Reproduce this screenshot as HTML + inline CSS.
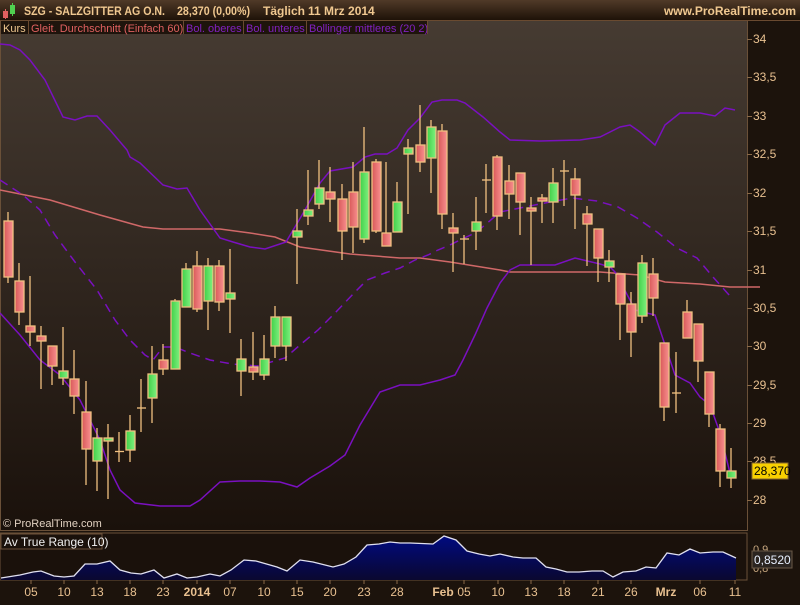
<!DOCTYPE html>
<html><head><meta charset="utf-8"><style>
html,body{margin:0;padding:0;background:#1c130c;}
body{width:800px;height:600px;overflow:hidden;font-family:"Liberation Sans",sans-serif;}
</style></head><body>
<svg width="800" height="600" xmlns="http://www.w3.org/2000/svg" font-family="Liberation Sans, sans-serif">
<defs>
<linearGradient id="tb" x1="0" y1="0" x2="0" y2="1"><stop offset="0" stop-color="#503a28"/><stop offset="1" stop-color="#1e1208"/></linearGradient>
<linearGradient id="bg" x1="0" y1="0" x2="0" y2="1"><stop offset="0" stop-color="#463b32"/><stop offset="1" stop-color="#1a110b"/></linearGradient>
<linearGradient id="rd" x1="0" y1="0" x2="1" y2="0"><stop offset="0" stop-color="#d85858"/><stop offset="1" stop-color="#f89090"/></linearGradient>
<linearGradient id="gr" x1="0" y1="0" x2="1" y2="0"><stop offset="0" stop-color="#40d048"/><stop offset="1" stop-color="#80f080"/></linearGradient>
<linearGradient id="atr" x1="0" y1="0" x2="0" y2="1"><stop offset="0" stop-color="#000a80"/><stop offset="1" stop-color="#0a0830"/></linearGradient>
</defs>
<rect width="800" height="600" fill="#1c130c"/>
<rect width="800" height="20" fill="url(#tb)"/>
<line x1="0" y1="20.5" x2="800" y2="20.5" stroke="#6a4a30"/>
<rect x="0" y="21" width="747" height="509" fill="url(#bg)"/>
<line x1="747.5" y1="21" x2="747.5" y2="530" stroke="#6a5038"/>
<line x1="0" y1="530.5" x2="748" y2="530.5" stroke="#6a5038"/>
<line x1="0.5" y1="21" x2="0.5" y2="530" stroke="#6a5038"/>
<rect x="0" y="533" width="747" height="47" fill="#1a110b" stroke="#6a5038"/>
<!-- title -->
<rect x="3" y="11" width="5" height="7" fill="#e06060"/><line x1="5.5" y1="9" x2="5.5" y2="19" stroke="#e06060"/>
<rect x="10" y="5" width="5" height="9" fill="#50d050"/><line x1="12.5" y1="3" x2="12.5" y2="16" stroke="#50d050"/>
<g font-size="12" font-weight="bold" fill="#f0c890">
<text x="24" y="15" textLength="141" lengthAdjust="spacingAndGlyphs">SZG - SALZGITTER AG O.N.</text>
<text x="177" y="15" textLength="73" lengthAdjust="spacingAndGlyphs">28,370 (0,00%)</text>
<text x="263" y="15">Täglich</text>
<text x="308" y="15">11 Mrz 2014</text>
<text x="796" y="15" text-anchor="end">www.ProRealTime.com</text>
</g>
<!-- legend -->
<rect x="1" y="21" width="426" height="13" fill="#1e140c"/>
<text x="3" y="32" font-size="11" fill="#f0c890">Kurs</text>
<line x1="28.5" y1="21" x2="28.5" y2="34" stroke="#6a4a30"/>
<text x="31" y="32" font-size="11" fill="#e06060">Gleit. Durchschnitt (Einfach 60)</text>
<line x1="183.5" y1="21" x2="183.5" y2="34" stroke="#6a4a30"/>
<text x="186" y="32" font-size="11" fill="#8020c0">Bol. oberes</text>
<line x1="243.5" y1="21" x2="243.5" y2="34" stroke="#6a4a30"/>
<text x="246" y="32" font-size="11" fill="#8020c0">Bol. unteres</text>
<line x1="306.5" y1="21" x2="306.5" y2="34" stroke="#6a4a30"/>
<text x="309" y="32" font-size="11" fill="#8020c0">Bollinger mittleres (20 2)</text>
<line x1="427.5" y1="21" x2="427.5" y2="34" stroke="#6a4a30"/>
<!-- axis -->
<g font-size="12" fill="#e8c090" stroke="none">
<text x="753" y="43">34</text><text x="753" y="81">33,5</text><text x="753" y="120">33</text><text x="753" y="158">32,5</text><text x="753" y="197">32</text><text x="753" y="235">31,5</text><text x="753" y="274">31</text><text x="753" y="312">30,5</text><text x="753" y="350">30</text><text x="753" y="389">29,5</text><text x="753" y="427">29</text><text x="753" y="465">28,5</text><text x="753" y="504">28</text>
</g>
<g stroke="#8a6a48"><line x1="747" y1="39.5" x2="752" y2="39.5"/><line x1="747" y1="77.5" x2="752" y2="77.5"/><line x1="747" y1="116.5" x2="752" y2="116.5"/><line x1="747" y1="154.5" x2="752" y2="154.5"/><line x1="747" y1="193.5" x2="752" y2="193.5"/><line x1="747" y1="231.5" x2="752" y2="231.5"/><line x1="747" y1="270.5" x2="752" y2="270.5"/><line x1="747" y1="308.5" x2="752" y2="308.5"/><line x1="747" y1="346.5" x2="752" y2="346.5"/><line x1="747" y1="385.5" x2="752" y2="385.5"/><line x1="747" y1="423.5" x2="752" y2="423.5"/><line x1="747" y1="461.5" x2="752" y2="461.5"/><line x1="747" y1="500.5" x2="752" y2="500.5"/></g>
<!-- MA60 -->
<polyline fill="none" stroke="#d06868" stroke-width="1.5" points="0,190 50,200 100,215 143,227 163,229 220,229 250,233 275,237 300,247 350,254 400,258 420,258 450,262 500,270 510,272 600,272 640,275 665,282 700,284 730,287 760,287"/>
<!-- upper band -->
<polyline fill="none" stroke="#7a10c0" stroke-width="1.5" points="0,44 10,45 20,50 30,60 45,80 63,117 75,120 87,116 97,116 110,130 127,150 130,157 140,163 163,185 177,189 187,188 200,210 220,238 233,242 250,247 265,249 286,242 305,210 320,183 330,171 353,167 365,157 375,154 387,154 397,148 408,130 420,118 432,102 442,100 457,100 465,103 483,117 500,132 510,140 540,141 580,140 600,137 620,127 630,125 640,132 655,145 665,125 680,113 700,113 715,116 725,108 735,110"/>
<!-- lower band -->
<polyline fill="none" stroke="#7a10c0" stroke-width="1.5" points="0,313 20,335 40,360 60,375 80,400 100,440 110,470 120,490 135,503 160,506 190,506 200,500 220,482 240,481 260,481 280,482 297,487 310,478 330,466 345,455 360,425 380,392 400,385 420,385 440,380 455,375 463,360 475,335 487,308 500,283 510,270 520,265 555,265 575,258 600,264 610,267 615,272 630,300 635,310 655,315 665,345 675,375 690,383 700,397 710,405 720,433 731,477"/>
<!-- middle dashed -->
<polyline fill="none" stroke="#7a10c0" stroke-width="1.5" stroke-dasharray="9,6" points="0,180 23,195 40,210 55,235 75,262 97,290 115,320 130,340 145,355 153,360 163,347 175,347 190,353 210,360 232,364 245,365 257,366 285,358 300,345 318,330 335,313 355,292 367,280 385,273 400,268 415,260 428,255 438,250 450,245 460,240 475,233 485,225 500,212 550,202 572,198 597,201 618,207 637,218 657,232 677,248 697,258 713,277 730,296"/>
<!-- candles -->
<g stroke="#f0c080" stroke-width="1.3">
<line x1="8" y1="212" x2="8" y2="283"/><rect x="4" y="221" width="9" height="56" fill="url(#rd)"/>
<line x1="19" y1="263" x2="19" y2="325"/><rect x="15" y="281" width="9" height="31" fill="url(#rd)"/>
<line x1="30" y1="276" x2="30" y2="346"/><rect x="26" y="326" width="9" height="6" fill="url(#rd)"/>
<line x1="41" y1="326" x2="41" y2="389"/><rect x="37" y="336" width="9" height="5" fill="url(#rd)"/>
<line x1="52" y1="346" x2="52" y2="385"/><rect x="48" y="346" width="9" height="20" fill="url(#rd)"/>
<line x1="63" y1="327" x2="63" y2="385"/><rect x="59" y="371" width="9" height="7" fill="url(#gr)"/>
<line x1="74" y1="350" x2="74" y2="414"/><rect x="70" y="379" width="9" height="17" fill="url(#rd)"/>
<line x1="86" y1="381" x2="86" y2="485"/><rect x="82" y="412" width="9" height="37" fill="url(#rd)"/>
<line x1="97" y1="428" x2="97" y2="491"/><rect x="93" y="438" width="9" height="23" fill="url(#gr)"/>
<line x1="108" y1="424" x2="108" y2="499"/><rect x="104" y="438" width="9" height="3" fill="url(#gr)"/>
<line x1="119" y1="432" x2="119" y2="462"/><line x1="115" y1="451.5" x2="124" y2="451.5"/>
<line x1="130" y1="415" x2="130" y2="462"/><rect x="126" y="431" width="9" height="19" fill="url(#gr)"/>
<line x1="141" y1="379" x2="141" y2="432"/><line x1="137" y1="408" x2="146" y2="408"/>
<line x1="152" y1="346" x2="152" y2="423"/><rect x="148" y="374" width="9" height="24" fill="url(#gr)"/>
<line x1="163" y1="344" x2="163" y2="375"/><rect x="159" y="360" width="9" height="9" fill="url(#rd)"/>
<line x1="175" y1="299" x2="175" y2="369"/><rect x="171" y="301" width="9" height="68" fill="url(#gr)"/>
<line x1="186" y1="263" x2="186" y2="307"/><rect x="182" y="269" width="9" height="38" fill="url(#gr)"/>
<line x1="197" y1="251" x2="197" y2="312"/><rect x="193" y="266" width="9" height="43" fill="url(#rd)"/>
<line x1="208" y1="258" x2="208" y2="330"/><rect x="204" y="266" width="9" height="35" fill="url(#gr)"/>
<line x1="219" y1="260" x2="219" y2="311"/><rect x="215" y="266" width="9" height="36" fill="url(#rd)"/>
<line x1="230" y1="249" x2="230" y2="333"/><rect x="226" y="293" width="9" height="6" fill="url(#gr)"/>
<line x1="241" y1="339" x2="241" y2="396"/><rect x="237" y="359" width="9" height="12" fill="url(#gr)"/>
<line x1="253" y1="332" x2="253" y2="380"/><rect x="249" y="367" width="9" height="5" fill="url(#rd)"/>
<line x1="264" y1="335" x2="264" y2="380"/><rect x="260" y="359" width="9" height="16" fill="url(#gr)"/>
<line x1="275" y1="306" x2="275" y2="358"/><rect x="271" y="317" width="9" height="29" fill="url(#gr)"/>
<line x1="286" y1="317" x2="286" y2="361"/><rect x="282" y="317" width="9" height="29" fill="url(#gr)"/>
<line x1="297" y1="209" x2="297" y2="284"/><rect x="293" y="231" width="9" height="6" fill="url(#gr)"/>
<line x1="308" y1="170" x2="308" y2="225"/><rect x="304" y="210" width="9" height="6" fill="url(#gr)"/>
<line x1="319" y1="160" x2="319" y2="209"/><rect x="315" y="188" width="9" height="16" fill="url(#gr)"/>
<line x1="330" y1="167" x2="330" y2="222"/><rect x="326" y="192" width="9" height="7" fill="url(#rd)"/>
<line x1="342" y1="184" x2="342" y2="260"/><rect x="338" y="199" width="9" height="32" fill="url(#rd)"/>
<line x1="353" y1="162" x2="353" y2="253"/><rect x="349" y="192" width="9" height="35" fill="url(#rd)"/>
<line x1="364" y1="127" x2="364" y2="243"/><rect x="360" y="172" width="9" height="67" fill="url(#gr)"/>
<line x1="376" y1="159" x2="376" y2="233"/><rect x="372" y="162" width="9" height="69" fill="url(#rd)"/>
<line x1="386" y1="162" x2="386" y2="246"/><rect x="382" y="233" width="9" height="13" fill="url(#rd)"/>
<line x1="397" y1="182" x2="397" y2="232"/><rect x="393" y="202" width="9" height="30" fill="url(#gr)"/>
<line x1="408" y1="139" x2="408" y2="214"/><rect x="404" y="148" width="9" height="6" fill="url(#gr)"/>
<line x1="420" y1="105" x2="420" y2="172"/><rect x="416" y="145" width="9" height="17" fill="url(#rd)"/>
<line x1="431" y1="120" x2="431" y2="193"/><rect x="427" y="127" width="9" height="31" fill="url(#gr)"/>
<line x1="442" y1="124" x2="442" y2="229"/><rect x="438" y="131" width="9" height="83" fill="url(#rd)"/>
<line x1="453" y1="213" x2="453" y2="272"/><rect x="449" y="228" width="9" height="5" fill="url(#rd)"/>
<line x1="464" y1="235" x2="464" y2="264"/><line x1="460" y1="239" x2="469" y2="239"/>
<line x1="476" y1="197" x2="476" y2="250"/><rect x="472" y="222" width="9" height="9" fill="url(#gr)"/>
<line x1="486" y1="164" x2="486" y2="213"/><line x1="482" y1="180" x2="491" y2="180"/>
<line x1="497" y1="155" x2="497" y2="230"/><rect x="493" y="157" width="9" height="59" fill="url(#rd)"/>
<line x1="509" y1="165" x2="509" y2="219"/><rect x="505" y="181" width="9" height="13" fill="url(#rd)"/>
<line x1="520" y1="173" x2="520" y2="235"/><rect x="516" y="173" width="9" height="29" fill="url(#rd)"/>
<line x1="531" y1="197" x2="531" y2="265"/><rect x="527" y="208" width="9" height="3" fill="url(#rd)"/>
<line x1="542" y1="194" x2="542" y2="223"/><rect x="538" y="198" width="9" height="3" fill="url(#rd)"/>
<line x1="553" y1="168" x2="553" y2="223"/><rect x="549" y="183" width="9" height="19" fill="url(#gr)"/>
<line x1="564" y1="160" x2="564" y2="206"/><line x1="560" y1="171" x2="569" y2="171"/>
<line x1="575" y1="168" x2="575" y2="229"/><rect x="571" y="179" width="9" height="16" fill="url(#rd)"/>
<line x1="587" y1="206" x2="587" y2="266"/><rect x="583" y="214" width="9" height="10" fill="url(#rd)"/>
<line x1="598" y1="229" x2="598" y2="282"/><rect x="594" y="229" width="9" height="29" fill="url(#rd)"/>
<line x1="609" y1="250" x2="609" y2="282"/><rect x="605" y="261" width="9" height="6" fill="url(#gr)"/>
<line x1="620" y1="274" x2="620" y2="340"/><rect x="616" y="274" width="9" height="30" fill="url(#rd)"/>
<line x1="631" y1="292" x2="631" y2="357"/><rect x="627" y="304" width="9" height="28" fill="url(#rd)"/>
<line x1="642" y1="255" x2="642" y2="323"/><rect x="638" y="263" width="9" height="53" fill="url(#gr)"/>
<line x1="653" y1="258" x2="653" y2="316"/><rect x="649" y="274" width="9" height="24" fill="url(#rd)"/>
<line x1="664" y1="343" x2="664" y2="421"/><rect x="660" y="343" width="9" height="64" fill="url(#rd)"/>
<line x1="676" y1="352" x2="676" y2="413"/><line x1="672" y1="393" x2="681" y2="393"/>
<line x1="687" y1="300" x2="687" y2="338"/><rect x="683" y="312" width="9" height="26" fill="url(#rd)"/>
<line x1="698" y1="324" x2="698" y2="382"/><rect x="694" y="324" width="9" height="37" fill="url(#rd)"/>
<line x1="709" y1="372" x2="709" y2="427"/><rect x="705" y="372" width="9" height="42" fill="url(#rd)"/>
<line x1="720" y1="424" x2="720" y2="487"/><rect x="716" y="429" width="9" height="42" fill="url(#rd)"/>
<line x1="731" y1="448" x2="731" y2="488"/><rect x="727" y="471" width="9" height="7" fill="url(#gr)"/>
</g>
<rect x="752" y="463" width="36" height="16" fill="#f8d000" stroke="#8a6a30"/>
<text x="754" y="475" font-size="12" fill="#000">28,370</text>
<text x="3" y="527" font-size="11" fill="#e0d0c0">© ProRealTime.com</text>
<!-- ATR -->
<polygon fill="url(#atr)" points="1,578 20,575 33,572 41,571 54,576 64,577 74,576 85,564 97,564 110,561 120,570 131,573 141,574 154,570 164,578 177,574 187,578 197,577 210,574 220,576 231,570 244,560 256,561 277,567 287,571 300,560 313,562 333,567 344,564 356,557 367,545 379,544 390,542 400,543 410,543 433,544 444,536 456,540 467,551 479,554 490,556 500,554 513,557 523,558 536,558 546,567 556,569 567,572 579,572 592,571 603,571 613,577 623,572 636,571 646,567 656,568 667,553 679,555 690,549 700,553 713,552 723,552 736,558 736,580 1,580"/>
<polyline fill="none" stroke="#e0e0f0" stroke-width="1.3" points="1,578 20,575 33,572 41,571 54,576 64,577 74,576 85,564 97,564 110,561 120,570 131,573 141,574 154,570 164,578 177,574 187,578 197,577 210,574 220,576 231,570 244,560 256,561 277,567 287,571 300,560 313,562 333,567 344,564 356,557 367,545 379,544 390,542 400,543 410,543 433,544 444,536 456,540 467,551 479,554 490,556 500,554 513,557 523,558 536,558 546,567 556,569 567,572 579,572 592,571 603,571 613,577 623,572 636,571 646,567 656,568 667,553 679,555 690,549 700,553 713,552 723,552 736,558"/>
<rect x="1" y="534" width="101" height="15" fill="#1a110b" stroke="#6a5038"/>
<text x="4" y="546" font-size="12" fill="#f0f0f0">Av True Range (10)</text>
<text x="753" y="553" font-size="11" fill="#c8a880">0,9</text>
<text x="753" y="572" font-size="11" fill="#c8a880">0,8</text>
<rect x="752" y="551" width="40" height="17" fill="#2a2420" stroke="#6a5a48"/>
<text x="754" y="564" font-size="12" fill="#e8f0ff">0,8520</text>
<!-- x axis -->
<g font-size="12" fill="#e8c090" text-anchor="middle">
<text x="31" y="596">05</text><text x="64" y="596">10</text><text x="97" y="596">13</text><text x="130" y="596">18</text><text x="163" y="596">23</text><text x="197" y="596" font-weight="bold">2014</text><text x="230" y="596">07</text><text x="264" y="596">10</text><text x="297" y="596">15</text><text x="330" y="596">20</text><text x="364" y="596">23</text><text x="397" y="596">28</text><text x="443" y="596" font-weight="bold">Feb</text><text x="464" y="596">05</text><text x="498" y="596">10</text><text x="531" y="596">13</text><text x="564" y="596">18</text><text x="598" y="596">21</text><text x="631" y="596">26</text><text x="666" y="596" font-weight="bold">Mrz</text><text x="700" y="596">06</text><text x="735" y="596">11</text>
</g>
<g stroke="#8a6a48"><line x1="31" y1="580" x2="31" y2="584"/><line x1="64" y1="580" x2="64" y2="584"/><line x1="97" y1="580" x2="97" y2="584"/><line x1="130" y1="580" x2="130" y2="584"/><line x1="163" y1="580" x2="163" y2="584"/><line x1="197" y1="580" x2="197" y2="584"/><line x1="230" y1="580" x2="230" y2="584"/><line x1="264" y1="580" x2="264" y2="584"/><line x1="297" y1="580" x2="297" y2="584"/><line x1="330" y1="580" x2="330" y2="584"/><line x1="364" y1="580" x2="364" y2="584"/><line x1="397" y1="580" x2="397" y2="584"/><line x1="464" y1="580" x2="464" y2="584"/><line x1="498" y1="580" x2="498" y2="584"/><line x1="531" y1="580" x2="531" y2="584"/><line x1="564" y1="580" x2="564" y2="584"/><line x1="598" y1="580" x2="598" y2="584"/><line x1="631" y1="580" x2="631" y2="584"/><line x1="700" y1="580" x2="700" y2="584"/><line x1="735" y1="580" x2="735" y2="584"/></g>
</svg>
</body></html>
